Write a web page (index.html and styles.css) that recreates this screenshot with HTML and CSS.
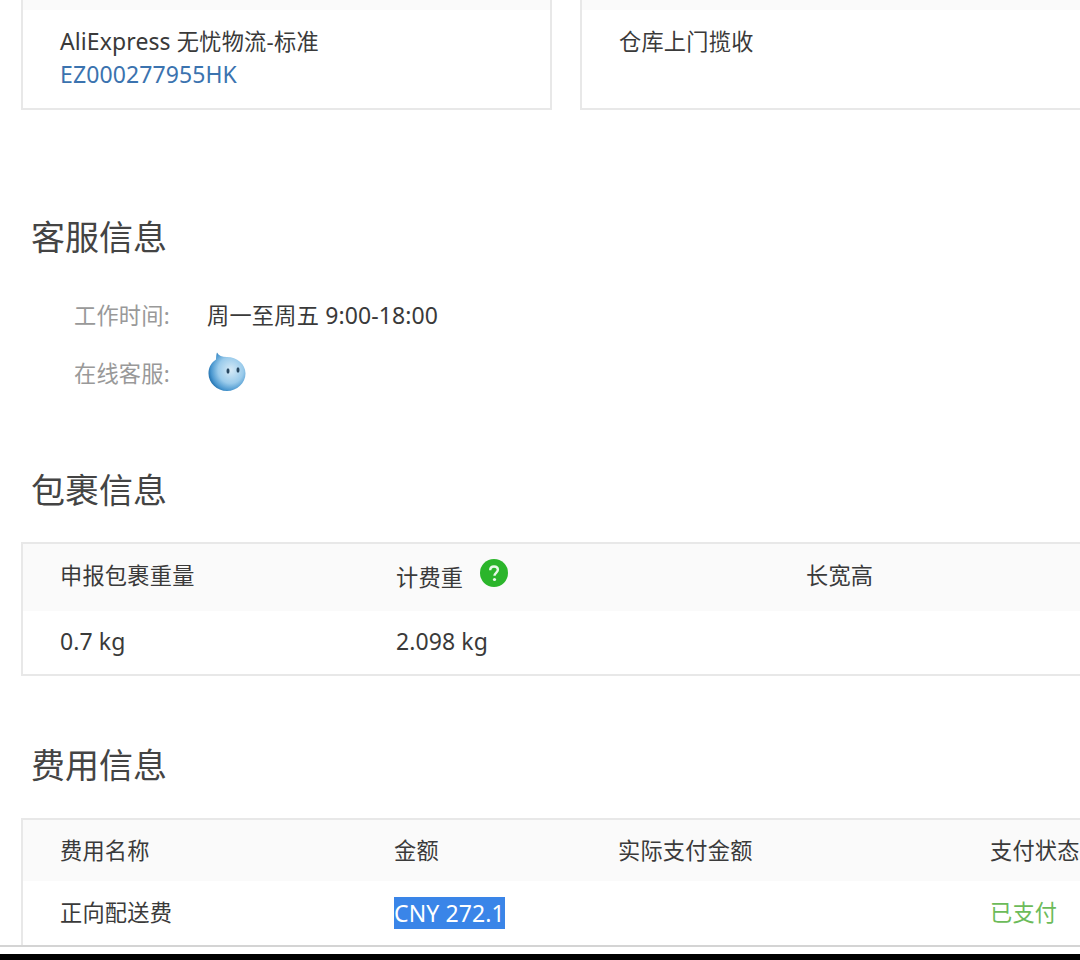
FILE: index.html
```html
<!DOCTYPE html>
<html lang="zh-CN">
<head>
<meta charset="utf-8">
<title>物流详情</title>
<link rel="stylesheet" href="styles.css">
</head>
<body>
<main class="page">
  <div class="cards">
    <section class="card">
      <div class="card-head"></div>
      <div class="card-body">
        <div><span class="lat">AliExpress </span>无忧物流-标准</div>
        <a class="link lat">EZ000277955HK</a>
      </div>
    </section>
    <section class="card card-wide">
      <div class="card-head"></div>
      <div class="card-body"><div>仓库上门揽收</div></div>
    </section>
  </div>

  <h2 class="title title-service">客服信息</h2>
  <div class="info">
    <div class="info-row"><span class="info-label">工作时间:</span><span>周一至周五 <span class="lat">9:00-18:00</span></span></div>
    <div class="info-row"><span class="info-label">在线客服:</span>
      <svg class="wangwang" width="40" height="40" viewBox="0 0 40 40" aria-hidden="true">
        <defs>
          <radialGradient id="ww" cx="60%" cy="46%" r="62%">
            <stop offset="0" stop-color="#d6eaf7"/>
            <stop offset="0.55" stop-color="#9acbeb"/>
            <stop offset="0.85" stop-color="#4a97cf"/>
            <stop offset="1" stop-color="#2270ad"/>
          </radialGradient>
        </defs>
        <path d="M10 0.500 C11.500 3.500 15 5 20 5 C30 5 38.500 12 38.500 21.500 C38.500 31 30 39 20 39 C10 39 1.500 31 1.500 21.500 C1.500 15 4.500 10.500 9 7.500 C9 5 9.300 2.500 10 0.500 Z" fill="url(#ww)"/>
        <ellipse cx="21" cy="19" rx="1.500" ry="2.800" fill="#27465f"/>
        <ellipse cx="31" cy="18" rx="1.500" ry="2.800" fill="#27465f"/>
      </svg>
    </div>
  </div>

  <h2 class="title title-package">包裹信息</h2>
  <section class="table table-package">
    <div class="thead pkg-head pkg-grid">
      <span>申报包裹重量</span>
      <span class="weight-head"><span class="weight-label">计费重</span>
        <svg class="help" width="28" height="28" viewBox="0 0 28 28" aria-hidden="true">
          <circle cx="14" cy="14" r="14" fill="#2bb52b"/>
          <path d="M10.200 11.200 C10.200 8.900 11.800 7.500 14 7.500 C16.300 7.500 17.900 8.800 17.900 10.800 C17.900 13.400 14.500 13.700 14.500 16.800" fill="none" stroke="#e8f8e8" stroke-width="2.400"/>
          <circle cx="14.500" cy="20.500" r="1.600" fill="#e8f8e8"/>
        </svg>
      </span>
      <span>长宽高</span>
    </div>
    <div class="tbody pkg-body pkg-grid">
      <span class="lat">0.7 kg</span>
      <span class="lat">2.098 kg</span>
      <span></span>
    </div>
  </section>

  <h2 class="title title-fee">费用信息</h2>
  <section class="table table-fee">
    <div class="thead fee-head fee-grid">
      <span>费用名称</span>
      <span>金额</span>
      <span>实际支付金额</span>
      <span>支付状态</span>
    </div>
    <div class="tbody fee-body fee-grid">
      <span>正向配送费</span>
      <span class="amount"><mark class="selected lat">CNY 272.1</mark></span>
      <span></span>
      <span class="paid">已支付</span>
    </div>
  </section>
</main>
<div class="bottom-bar"></div>
</body>
</html>
```
FILE: styles.css
```css
* { box-sizing: border-box; }
html, body { margin: 0; padding: 0; }
body {
  width: 1080px;
  height: 960px;
  overflow: hidden;
  background: #fff;
  color: #3a3a3a;
  font-family: "Noto Sans", "Noto Sans CJK SC", sans-serif;
  font-size: 22.2px;
  letter-spacing: 0.25px;
  display: flex;
  flex-direction: column;
}
.lat { font-size: 23px; letter-spacing: 0.1px; }
.page {
  height: 947px;
  flex: none;
  overflow: hidden;
  padding-left: 21px;
  border-bottom: 2px solid #d4d4d4;
}
.cards { display: flex; gap: 28px; width: 1200px; }
.card {
  width: 531px;
  height: 110px;
  border: 2px solid #e8e8e8;
  border-top: 0;
  flex: none;
}
.card-wide { width: 640px; }
.card-head { height: 10px; background: #fafafa; }
.card-body { padding: 15px 0 0 37px; line-height: 33px; }
.link { color: #3b73af; display: block; }
.title {
  margin: 0;
  font-size: 34px;
  font-weight: 400;
  letter-spacing: 0;
  line-height: 46px;
  padding-left: 10px;
  color: #444;
}
.title-service { margin-top: 104px; }
.title-package { margin-top: 66px; }
.title-fee { margin-top: 66px; }
.info { margin-top: 25px; padding-left: 53px; }
.info-row { display: flex; align-items: center; height: 58px; }
.info-label { width: 133px; color: #999; flex: none; }
.table { border: 2px solid #e8e8e8; width: 1200px; margin-top: 29px; }
.table-package { height: 134px; }
.table-fee { height: 140px; margin-top: 30px; }
.thead { background: #fafafa; align-items: center; }
.tbody { align-items: center; }
.pkg-head { height: 67px; padding-bottom: 7px; }
.pkg-body { height: 63px; padding-bottom: 3px; }
.fee-head { height: 61px; padding-bottom: 2px; }
.fee-body { height: 62px; padding-bottom: 2px; }
.pkg-grid { display: grid; grid-template-columns: 336px 410px 1fr; padding-left: 37px; }
.fee-grid { display: grid; grid-template-columns: 334px 224px 372px 1fr; padding-left: 37px; }
.weight-head { display: flex; align-items: center; gap: 16px; }
.weight-label { position: relative; top: 2px; }
.help { position: relative; top: -1px; margin-left: 1px; }
.wangwang { display: block; }
.amount { padding-top: 4px; }
.selected { display: inline-block; background: #3a85e8; color: #fff; line-height: 32px; }
.paid { color: #6cbb5a; }
.bottom-bar { flex: none; height: 6px; margin-top: 7px; background: #000; }
```
